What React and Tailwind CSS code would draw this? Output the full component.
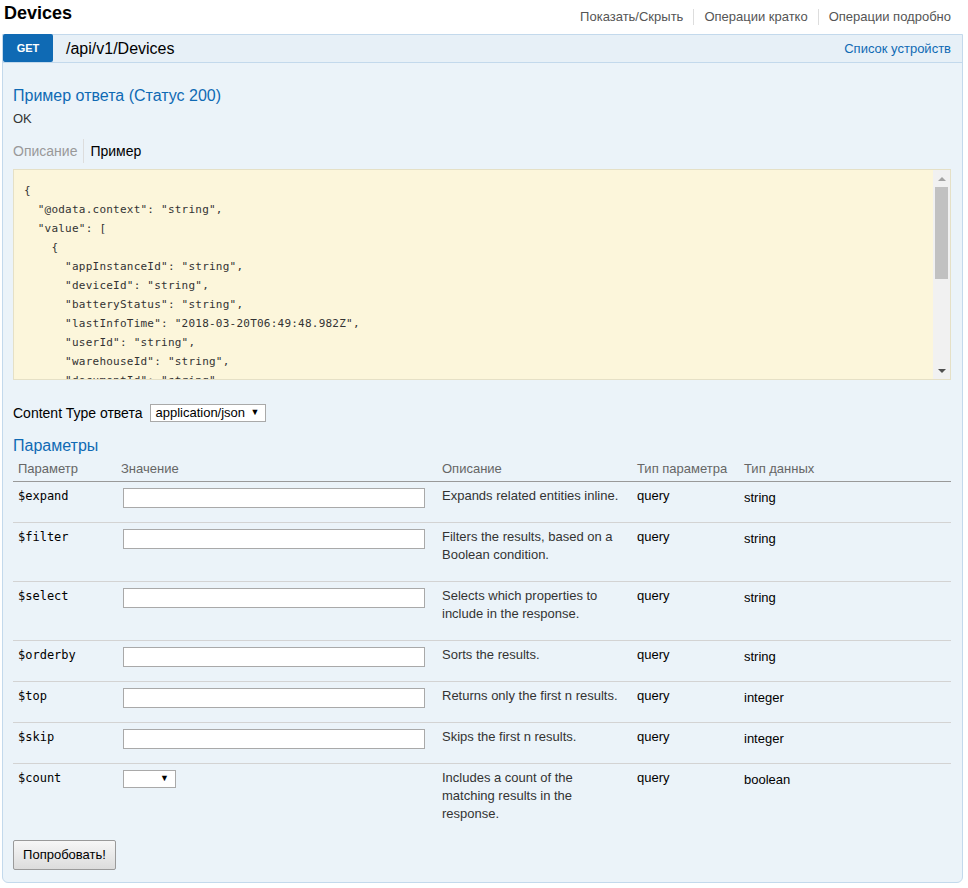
import React from 'react';

const params = [
  { name: '$expand', desc: 'Expands related entities inline.', type: 'string' },
  { name: '$filter', desc: 'Filters the results, based on a Boolean condition.', type: 'string' },
  { name: '$select', desc: 'Selects which properties to include in the response.', type: 'string' },
  { name: '$orderby', desc: 'Sorts the results.', type: 'string' },
  { name: '$top', desc: 'Returns only the first n results.', type: 'integer' },
  { name: '$skip', desc: 'Skips the first n results.', type: 'integer' },
  { name: '$count', desc: 'Includes a count of the matching results in the response.', type: 'boolean', select: true },
];

const sample = `{
  "@odata.context": "string",
  "value": [
    {
      "appInstanceId": "string",
      "deviceId": "string",
      "batteryStatus": "string",
      "lastInfoTime": "2018-03-20T06:49:48.982Z",
      "userId": "string",
      "warehouseId": "string",
      "documentId": "string",
      "isOnline": true
    }
  ]
}`;

// fake scrollbar so it looks the same in every browser
const Scrollbar = () => (
  <div className="w-[17px] shrink-0 bg-[#f1f1f1] flex flex-col items-center">
    <div className="h-[17px] w-full flex items-center justify-center">
      <div className="w-0 h-0 border-l-[4px] border-r-[4px] border-b-[4px] border-l-transparent border-r-transparent border-b-[#a3a3a3]" />
    </div>
    <div className="w-[13px] h-[92px] bg-[#c1c1c1]" />
    <div className="flex-1" />
    <div className="h-[17px] w-full flex items-center justify-center">
      <div className="w-0 h-0 border-l-[4px] border-r-[4px] border-t-[4px] border-l-transparent border-r-transparent border-t-[#505050]" />
    </div>
  </div>
);

const ParamRow = ({ p, last }) => (
  <div className={`grid grid-cols-[103px_321px_195px_107px_1fr] ${last ? '' : 'border-b border-[#d3d3d3]'}`}>
    <div className="pl-[5px] pt-[5px] pb-[17px] font-['DejaVu_Sans_Mono',monospace] text-[12px] leading-[18px] text-black">
      {p.name}
    </div>
    <div className="pl-[7px] pt-[6px]">
      {p.select ? (
        <div className="w-[53px] h-[18px] bg-white border border-[#a9a9a9] flex items-center justify-end pr-[6px] text-[9px] text-black">
          ▼
        </div>
      ) : (
        <input type="text" className="block w-[302px] h-[20px] bg-white border border-[#a9a9a9] outline-none" />
      )}
    </div>
    <div className="pl-[5px] pr-[12px] pt-[5px] pb-[17px] text-[13px] leading-[18px] text-[#333]">{p.desc}</div>
    <div className="pl-[5px] pt-[5px] text-[13px] leading-[18px] text-black">query</div>
    <div className="pl-[5px] pt-[7px] text-[13px] leading-[18px] text-black">{p.type}</div>
  </div>
);

const App = () => {
  return (
    <div className="min-h-[888px] bg-white pl-[2px] pr-[5px] font-['Liberation_Sans',Arial,sans-serif] text-[#333]">
      <div className="h-[34px] flex justify-between">
        <h2 className="pl-[2px] pt-[3px] text-[18px] leading-[21px] font-bold text-black">Devices</h2>
        <ul className="flex items-start pt-[9px] pr-[2px] text-[13px] leading-[16px] text-[#555]">
          <li className="px-[10px]">Показать/Скрыть</li>
          <li className="px-[10px] border-l border-[#ddd]">Операции кратко</li>
          <li className="pl-[10px] pr-[10px] border-l border-[#ddd]">Операции подробно</li>
        </ul>
      </div>

      <div className="border border-[#c3d9ec] rounded-b-[6px] bg-[#ebf3f9]">
        <div className="h-[28px] flex items-center bg-[#e7f0f7] border-b border-[#c3d9ec]">
          <span className="w-[50px] h-[28px] -mt-px bg-[#0f6ab4] text-white text-[11px] font-bold flex items-center justify-center rounded-[2px]">
            GET
          </span>
          <span className="ml-[13px] text-[16px] text-black">/api/v1/Devices</span>
          <span className="ml-auto pr-[11px] text-[13px] text-[#0f6ab4]">Список устройств</span>
        </div>

        <div className="pl-[10px] pr-[11px] pt-[24px] pb-[12px]">
          <h4 className="text-[16px] leading-[18px] text-[#0f6ab4] mb-[6px]">Пример ответа (Статус 200)</h4>
          <p className="text-[13px] leading-[15px] text-[#333]">OK</p>

          <div className="mt-[13px] flex text-[14px] leading-[24px]">
            <span className="pr-[6px] text-[#999]">Описание</span>
            <span className="pl-[6px] border-l border-[#ddd] text-black">Пример</span>
          </div>

          <div className="mt-[6px] h-[211px] flex bg-[#fcf6db] border border-[#e5e0c6]">
            <pre className="flex-1 overflow-hidden pl-[10px] pt-[11px] font-['DejaVu_Sans_Mono',monospace] text-[11px] tracking-[0.23px] leading-[19px] text-[#333]">
              {sample}
            </pre>
            <Scrollbar />
          </div>

          <div className="mt-[24px] h-[18px] flex items-center text-black">
            <span className="text-[14px]">Content Type ответа</span>
            <div className="ml-[8px] h-[18px] w-[116px] bg-white border border-[#a9a9a9] flex items-center justify-between pl-[4px] pr-[6px] text-[13px]">
              <span>application/json</span>
              <span className="text-[9px]">▼</span>
            </div>
          </div>

          <h4 className="mt-[15px] text-[16px] leading-[18px] text-[#0f6ab4]">Параметры</h4>

          <div className="grid grid-cols-[103px_321px_195px_107px_1fr] border-b border-[#999] text-[13px] leading-[15px] text-[#666]">
            <div className="pl-[5px] pt-[6px] pb-[5px]">Параметр</div>
            <div className="pl-[5px] pt-[6px] pb-[5px]">Значение</div>
            <div className="pl-[5px] pt-[6px] pb-[5px]">Описание</div>
            <div className="pl-[5px] pt-[6px] pb-[5px]">Тип параметра</div>
            <div className="pl-[5px] pt-[6px] pb-[5px]">Тип данных</div>
          </div>

          {params.map((p, i) => (
            <ParamRow key={p.name} p={p} last={i === params.length - 1} />
          ))}

          <button className="w-[103px] h-[30px] border border-[#9a9a9a] rounded-[2px] bg-gradient-to-b from-[#f7f7f7] to-[#dcdcdc] text-[13px] text-black">
            Попробовать!
          </button>
        </div>
      </div>
    </div>
  );
};

export default App;
